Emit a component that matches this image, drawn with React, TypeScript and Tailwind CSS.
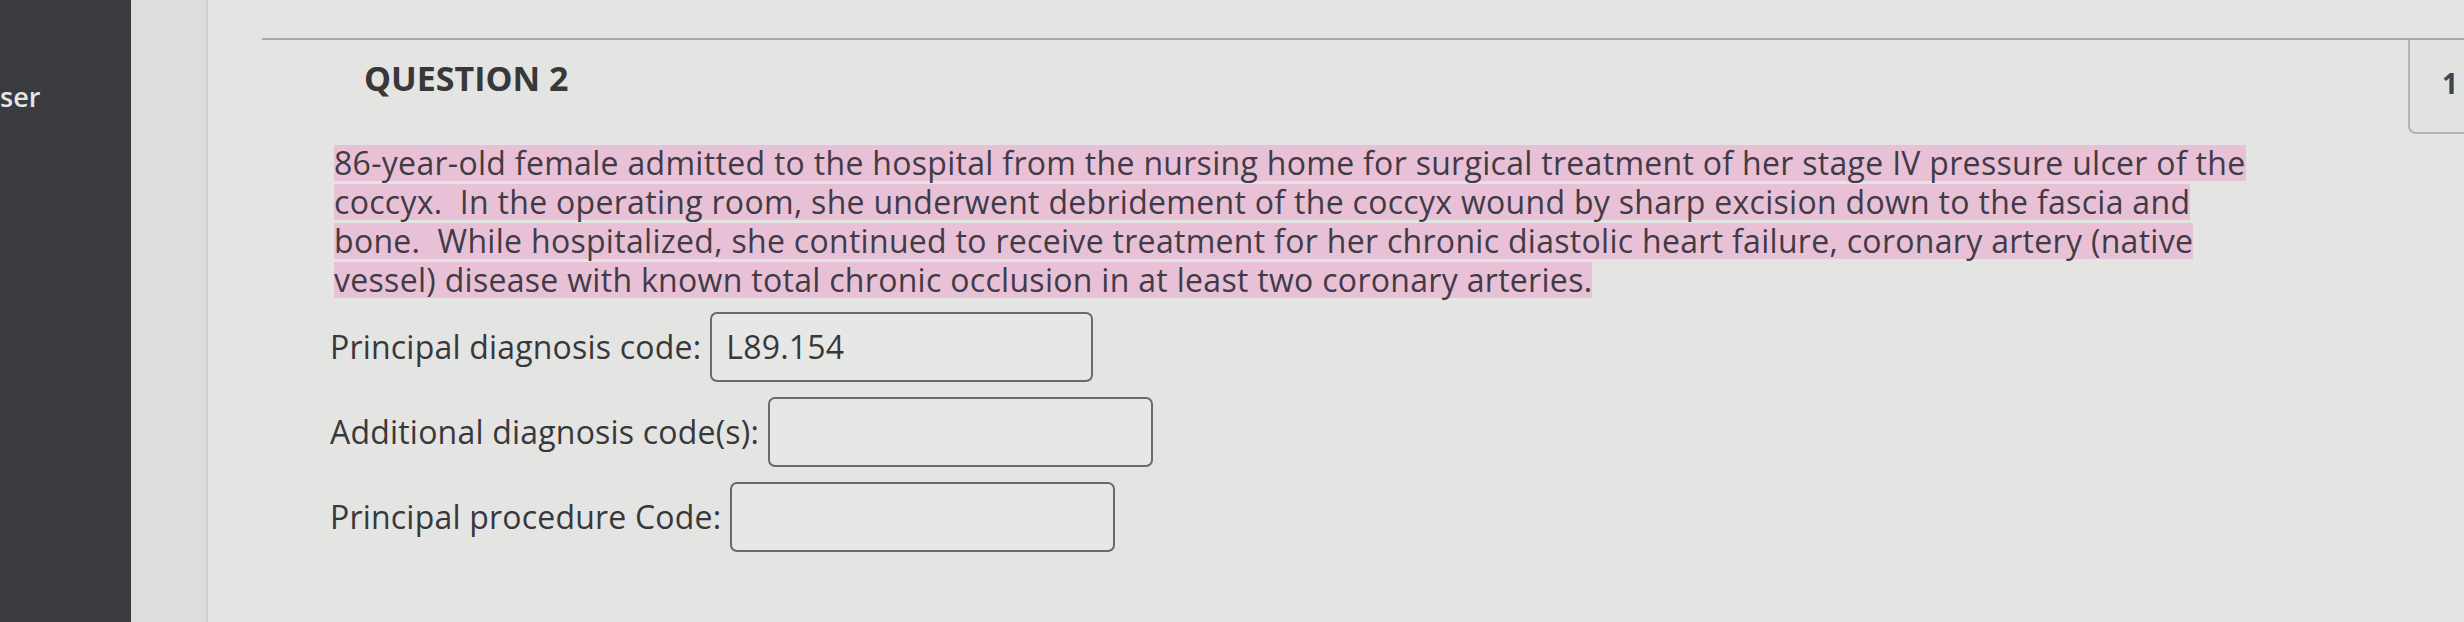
const lines = [
  '86-year-old female admitted to the hospital from the nursing home for surgical treatment of her stage IV pressure ulcer of the',
  'coccyx.\u00a0 In the operating room, she underwent debridement of the coccyx wound by sharp excision down to the fascia and',
  'bone.\u00a0 While hospitalized, she continued to receive treatment for her chronic diastolic heart failure, coronary artery (native',
  'vessel) disease with known total chronic occlusion in at least two coronary arteries.',
];

const fields = [
  { label: 'Principal diagnosis code:', value: 'L89.154', box: 'w-[383px]' },
  { label: 'Additional diagnosis code(s):', value: '', box: 'w-[385px]' },
  { label: 'Principal procedure Code:', value: '', box: 'w-[385px]' },
];

const App = () => {
  return (
    <div className="flex w-[2464px] h-[622px] overflow-hidden bg-[#e4e4e2] font-['Open_Sans',sans-serif] text-[#3a3a3e]">
      <aside className="w-[131px] shrink-0 bg-[#3a3b3e] pt-[78px]">
        <span className="block text-[27px] font-semibold leading-[38px] text-[#e6e6e6]">ser</span>
      </aside>
      <div className="w-[77px] shrink-0 bg-[#dddddc] border-r-2 border-[#cfcfce]" />

      <main className="flex-1 pt-[38px]">
        <div className="ml-[54px] flex border-t-2 border-[#a9a9a9]">
          <section className="flex-1 pt-[18px]">
            <h2 className="pl-[102px] text-[34px] font-bold leading-[40px] text-[#38383a]">QUESTION 2</h2>

            <div className="mt-[47px] pl-[72px] flex flex-col gap-[3px] text-[32px] leading-[36px] tracking-[0.3px] whitespace-nowrap">
              {lines.map((l) => (
                <div key={l} className="w-fit h-[36px] bg-[#e8c1d7] text-[#413b46]">{l}</div>
              ))}
            </div>

            <div className="mt-[14px] pl-[68px] flex flex-col gap-[15px]">
              {fields.map((f) => (
                <div key={f.label} className="flex items-center gap-[9px]">
                  <span className="text-[32px] leading-[40px] tracking-[0.2px] text-[#38383b]">{f.label}</span>
                  <div className={`${f.box} h-[70px] rounded-[7px] border-2 border-[#6a6a6b] bg-[#e7e7e5] flex items-center px-[14px] text-[32px] tracking-[0.2px] text-[#38383b]`}>
                    {f.value}
                  </div>
                </div>
              ))}
            </div>
          </section>

          <div className="w-[56px] h-[94px] shrink-0 border-l-2 border-b-2 border-[#b3b3b3] rounded-bl-[8px] bg-[#e2e2e0] flex items-start justify-end pt-[22px] pr-[6px]">
            <span className="text-[28px] font-bold text-[#3e4650]">1</span>
          </div>
        </div>
      </main>
    </div>
  );
};

export default App;
